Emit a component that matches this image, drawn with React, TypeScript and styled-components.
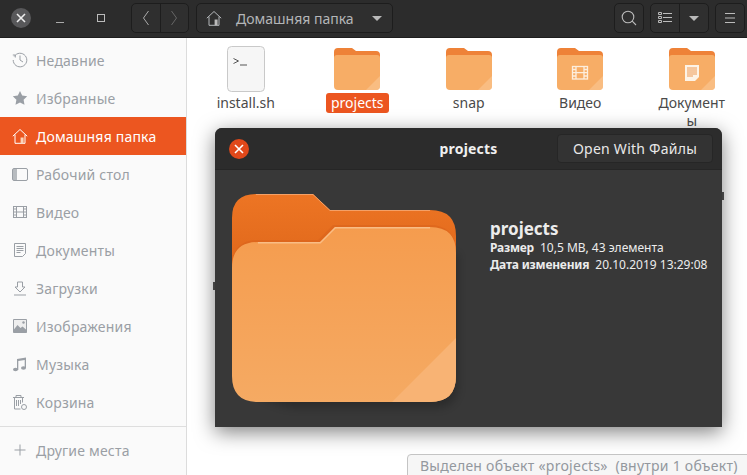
import React from "react";
import styled, { createGlobalStyle } from "styled-components";

const Global = createGlobalStyle`
  html, body { margin: 0; padding: 0; background: #fff; }
  body { width: 747px; height: 475px; overflow: hidden; font-family: "Noto Sans", "Liberation Sans", sans-serif; }
  * { box-sizing: border-box; }
`;

const Win = styled.div`
  position: relative; width: 747px; height: 475px; overflow: hidden; display: flex; flex-direction: column;
  font-size: 14px; background: #fff;
`;
const HeaderBar = styled.header`
  height: 38px; flex: none; background: #2c2c2c; border-bottom: 1px solid #1e1e1e;
  display: flex; align-items: flex-start; padding-top: 3px; color: #b9b9b9;
`;
const WinControls = styled.div`
  width: 131px; height: 30px; flex: none; display: flex; align-items: center; padding-left: 11px;
`;
const CloseCircle = styled.div`
  width: 20px; height: 20px; border-radius: 50%; background: #58585a; display: flex; align-items: center; justify-content: center; margin-right: 20px;
`;
const WinButton = styled.div`
  width: 20px; height: 20px; margin-right: 20px; display: flex; align-items: center; justify-content: center;
`;
const Group = styled.div<{ $w: number; $ml: number; $mr?: number }>`
  width: ${p => p.$w}px; margin-left: ${p => p.$ml}px; margin-right: ${p => p.$mr || 0}px; height: 30px; flex: none; background: #2f2f2f;
  border: 1px solid #1d1d1d; border-radius: 5px; display: flex; align-items: center;
`;
const Seg = styled.div<{ $border?: boolean }>`
  flex: 1; height: 100%; display: flex; align-items: center; justify-content: center;
  ${p => (p.$border ? "border-right: 1px solid #1d1d1d;" : "")}
`;
const PathGroup = styled(Group)`
  padding: 0 10px 0 9px; color: #b5b8bb;
`;
const PathLabel = styled.span`
  margin-left: 14px; flex: 1; font-size: 14px; color: #b4b6b8; white-space: nowrap;
`;
const Caret = styled.div`
  width: 0; height: 0; border-left: 5px solid transparent; border-right: 5px solid transparent; border-top: 5px solid #b9b9b9;
`;
const Spacer = styled.div`flex: 1;`;

const Body = styled.div`flex: 1; display: flex; min-height: 0;`;
const Sidebar = styled.aside`
  width: 187px; flex: none; background: #fafafa; border-right: 1px solid #dcdcdc; padding-top: 3px;
  display: flex; flex-direction: column;
`;
const SideItem = styled.div<{ $active?: boolean }>`
  height: 38px; flex: none; display: flex; align-items: center; padding-left: 12px; gap: 8px;
  font-size: 14px; white-space: nowrap; letter-spacing: .2px;
  color: ${p => (p.$active ? "#ffffff" : "#9a9fa5")};
  background: ${p => (p.$active ? "#ec5620" : "transparent")};
`;
const SideSep = styled.div`height: 1px; background: #dedede; margin-top: 5px;`;
const SideOther = styled(SideItem)`height: 46px;`;
const IconBox = styled.span`width: 16px; height: 16px; flex: none; display: flex;`;

const Grid = styled.main`
  flex: 1; display: grid; grid-template-columns: repeat(5, 111.5px); align-content: start; padding: 8px 0 0 3px;
`;
const Cell = styled.div`
  display: flex; flex-direction: column; align-items: center; color: #3d3d3d; font-size: 14px;
`;
const IconWrap = styled.div`height: 46px; display: flex; align-items: center; justify-content: center;`;
const Label = styled.div<{ $sel?: boolean }>`
  margin-top: 1px; padding: 1px 5px; border-radius: 3px; line-height: 18px; text-align: center; max-width: 80px;
  overflow-wrap: anywhere;
  color: ${p => (p.$sel ? "#fff" : "#4a4a4a")};
  background: ${p => (p.$sel ? "#ec5620" : "transparent")};
`;

const Dialog = styled.section`
  position: absolute; left: 215px; top: 128px; width: 507px; height: 299px; background: #383838;
  border-radius: 7px 7px 0 0; box-shadow: 0 5px 20px rgba(0,0,0,.5); display: flex; flex-direction: column; color: #eee;
`;
const DialogHead = styled.div`
  height: 42px; flex: none; background: #2c2c2c; border-bottom: 1px solid #262626; border-radius: 7px 7px 0 0;
  display: grid; grid-template-columns: 1fr auto 1fr; align-items: center; padding: 0 9px;
`;
const RedClose = styled.div`
  width: 20px; height: 20px; margin-left: 5px; border-radius: 50%; background: #e0481a; display: flex; align-items: center; justify-content: center;
`;
const DialogTitle = styled.div`font-weight: 700; font-size: 14px; letter-spacing: .2px; color: #f0f0f0;`;
const OpenBtn = styled.div`
  justify-self: end; width: 156px; height: 29px; background: #333333; border: 1px solid #262626; border-radius: 4px;
  display: flex; align-items: center; justify-content: center; font-size: 14px; letter-spacing: .25px; color: #e8e8e8; white-space: nowrap;
`;
const DialogBody = styled.div`flex: 1; display: flex; padding: 24px 0 0 17px; align-items: flex-start;`;
const Info = styled.div`margin-left: 34px; padding-top: 25px; display: flex; flex-direction: column; font-size: 12px; color: #ececec;`;
const InfoName = styled.div`font-size: 17px; font-weight: 700; line-height: 20px;`;
const InfoRow = styled.div`line-height: 17px; white-space: nowrap;`;
const InfoKey = styled.b`font-weight: 700; letter-spacing: -.2px; margin-right: 6px;`;

const Status = styled.div`
  position: absolute; left: 407px; top: 454px; width: 345px; height: 24px; background: #f6f6f6; border: 1px solid #c4c4c4;
  border-radius: 4px 0 0 0; padding-left: 12px; font-size: 14px; letter-spacing: .25px; line-height: 22px; color: #93989e; white-space: pre;
`;
const Tick = styled.div<{ $x: number; $y: number; $h: number }>`
  position: absolute; left: ${p => p.$x}px; top: ${p => p.$y}px; width: 2px; height: ${p => p.$h}px; background: #555;
`;

const S = { fill: "none", stroke: "currentColor", strokeWidth: 1 } as const;
const X = ({ c = "#fff" }: { c?: string }) => (
  <svg width="10" height="10" viewBox="0 0 10 10"><path d="M1 1l8 8M9 1l-8 8" stroke={c} strokeWidth="1.6" /></svg>
);
const HomeIcon = ({ fill }: { fill?: string }) => (
  <svg width="16" height="16" viewBox="0 0 16 16" {...S}>
    <path d="M.8 8.2L8 1.5l7.2 6.7M3 6.6v8.7h10V6.6" />
    <path d="M8.6 9.5h3v5.8h-3z" fill={fill || "currentColor"} stroke="none" />
  </svg>
);
const Clock = () => (
  <svg viewBox="0 0 16 16" width="16" height="16" {...S}>
    <path d="M2.2 4.5A6.8 6.8 0 1 1 1.2 8" /><path d="M8 3.5V8l3 2" /><path d="M.8 3h2.500v2.500" />
  </svg>
);
const Star = () => (
  <svg viewBox="0 0 16 16" width="16" height="16"><path d="M8 1l2.200 4.600 5 .7-3.600 3.500.9 5L8 12.400l-4.500 2.400.9-5L.8 6.300l5-.7z" fill="currentColor" /></svg>
);
const Desktop = () => (
  <svg viewBox="0 0 16 16" width="16" height="16" {...S}>
    <rect x=".5" y="2.500" width="15" height="12" rx="1.500" /><path d="M1 3h4v11H1z" fill="currentColor" stroke="none" opacity=".7" />
  </svg>
);
const Film = () => (
  <svg viewBox="0 0 16 16" width="16" height="16" {...S}>
    <rect x="1.500" y="2.500" width="13" height="11" /><path d="M4.500 2.500v11M11.500 2.500v11M4.500 8h7M1.500 5h3M1.500 8h3M1.500 11h3M11.500 5h3M11.500 8h3M11.500 11h3" />
  </svg>
);
const Doc = () => (
  <svg viewBox="0 0 16 16" width="16" height="16" {...S}>
    <path d="M2.500 1.500h11v10l-3 3h-8z" /><path d="M4.500 4.500h7M4.500 6.500h7M4.500 8.500h7M4.500 10.500h4" />
  </svg>
);
const Down = () => (
  <svg viewBox="0 0 16 16" width="16" height="16" {...S}>
    <path d="M5.500 2h5v5h2.500L8 12 3 7h2.500zM2 15h12" />
  </svg>
);
const Picture = () => (
  <svg viewBox="0 0 16 16" width="16" height="16">
    <path d="M1.500 1.500h13v13h-13z" fill="#eee" stroke="currentColor" /><path d="M1.500 12l4-5 3 3 2-1.500 4 3.500v2.500h-13z" fill="currentColor" /><circle cx="11.500" cy="4.500" r="1.200" fill="currentColor" />
  </svg>
);
const Music = () => (
  <svg viewBox="0 0 16 16" width="16" height="16">
    <path d="M5 3l9-1.500v10.500h-1.300V4L6.300 5v9H5z" fill="currentColor" /><ellipse cx="3.500" cy="13.500" rx="2.500" ry="1.800" fill="currentColor" /><ellipse cx="11.500" cy="12" rx="2.500" ry="1.800" fill="currentColor" />
  </svg>
);
const Trash = () => (
  <svg viewBox="0 0 16 16" width="16" height="16" {...S}>
    <path d="M1 3.500h11M4 3.500V1.500h5v2M2.500 3.500v11.500h6M10.500 3.500v5M4.500 6v6M6.500 6v6M8.500 6v4" /><circle cx="12" cy="13" r="2.500" />
  </svg>
);
const Plus = () => (
  <svg viewBox="0 0 16 16" width="16" height="16" {...S}><path d="M8 2.500v11M2.500 8h11" /></svg>
);

const SmallFolder = ({ glyph }: { glyph?: "film" | "doc" }) => (
  <svg width="46" height="42" viewBox="0 0 46 42">
    <path d="M0 4Q0 0 4 0h14l4 3h20q4 0 4 4v10H0z" fill="#ee8238" />
    <path d="M0 10q0-3 3-3h40q3 0 3 3v28q0 4-4 4H4q-4 0-4-4z" fill="#f7ad66" />
    <path d="M32 42l14-14v10q0 4-4 4z" fill="#f9c38f" opacity=".7" />
    {glyph === "film" && (
      <g stroke="#fdeedd" strokeWidth="1.300" fill="none">
        <rect x="15.500" y="18.500" width="15" height="12.500" /><path d="M19 18.500v12.500M27 18.500v12.500M19 24.700h8M15.500 21.500h3.500M15.500 24.700h3.500M15.500 28h3.500M27 21.500h3.500M27 24.700h3.500M27 28h3.500" />
      </g>
    )}
    {glyph === "doc" && (
      <g>
        <path d="M16 17h14v12l-4 4H16z" fill="#fdf3e6" />
        <path d="M18 20h10M18 22h10M18 24h10M18 26h10M18 28h6" stroke="#ee9a55" strokeWidth="1" />
      </g>
    )}
  </svg>
);
const ScriptFile = () => (
  <svg width="38" height="46" viewBox="0 0 38 46">
    <rect x=".5" y=".5" width="37" height="45" rx="4" fill="#f6f6f6" stroke="#c9c9c9" />
    <path d="M6.500 12.500l5 2.500-5 2.500M13 19h7" fill="none" stroke="#555" strokeWidth="1" />
  </svg>
);
const BigFolder = () => (
  <svg width="224" height="208" viewBox="0 0 224 208" style={{ overflow: "visible", flex: "none" }}>
    <defs>
      <linearGradient id="bf" x1="0" y1="0" x2="0" y2="1">
        <stop offset="0" stopColor="#f59c4e" /><stop offset="1" stopColor="#f5aa63" />
      </linearGradient>
      <linearGradient id="bb" x1="0" y1="0" x2="0" y2="1">
        <stop offset="0" stopColor="#ed7524" /><stop offset="1" stopColor="#dc6418" />
      </linearGradient>
      <filter id="blur" x="-20%" y="-20%" width="140%" height="140%"><feGaussianBlur stdDeviation="4" /></filter>
    </defs>
    <path d="M30 60h196v130q0 24-24 24H70q-20 0-40-10z" fill="#000" opacity=".22" filter="url(#blur)" />
    <path d="M0 24Q0 0 24 0h57l17 16h100q26 0 26 26v50H0z" fill="url(#bb)" />
    <path d="M24 .5h57l17 16h100" fill="none" stroke="#f4a066" strokeWidth="1" />
    <path d="M86 46l15-15h97q22 0 26 22v8H0V70q2-24 26-24z" fill="#d8631b" opacity=".55" />
    <path d="M88 48l15-15h95q26 0 26 26v123q0 26-26 26H26q-26 0-26-26V74q0-26 26-26z" fill="url(#bf)" />
    <path d="M26 48.700h62.300l15-15H198" fill="none" stroke="#f9bd85" strokeWidth="1.400" />
    <path d="M160 208l64-64v38q0 26-26 26z" fill="#f8b374" />
  </svg>
);

const items: { label: string; icon: React.ReactNode; active?: boolean }[] = [
  { label: "Недавние", icon: <Clock /> },
  { label: "Избранные", icon: <Star /> },
  { label: "Домашняя папка", icon: <HomeIcon fill="#fbd3b9" />, active: true },
  { label: "Рабочий стол", icon: <Desktop /> },
  { label: "Видео", icon: <Film /> },
  { label: "Документы", icon: <Doc /> },
  { label: "Загрузки", icon: <Down /> },
  { label: "Изображения", icon: <Picture /> },
  { label: "Музыка", icon: <Music /> },
  { label: "Корзина", icon: <Trash /> },
];

export default function App() {
  return (
    <Win>
      <Global />
      <HeaderBar>
        <WinControls>
          <CloseCircle><X c="#eee" /></CloseCircle>
          <WinButton><svg width="10" height="10"><path d="M0 9.500h8" stroke="#aaa" /></svg></WinButton>
          <WinButton><svg width="10" height="10"><rect x="1.500" y="1.500" width="7" height="7" fill="none" stroke="#bbb" /></svg></WinButton>
        </WinControls>
        <Group $w={58} $ml={0}>
          <Seg $border><svg width="8" height="16"><path d="M6.500 1L1.500 8l5 7" fill="none" stroke="#aaa" /></svg></Seg>
          <Seg><svg width="8" height="16"><path d="M1.500 1l5 7-5 7" fill="none" stroke="#666" /></svg></Seg>
        </Group>
        <PathGroup $w={197} $ml={7}>
          <HomeIcon fill="#bbb" />
          <PathLabel>Домашняя папка</PathLabel>
          <Caret />
        </PathGroup>
        <Spacer />
        <Group $w={30} $ml={0}>
          <Seg><svg width="16" height="16" viewBox="0 0 16 16" fill="none" stroke="#bbb" strokeWidth="1.100"><circle cx="7" cy="7" r="5.800" /><path d="M11.200 11.200L15 15" /></svg></Seg>
        </Group>
        <Group $w={59} $ml={6}>
          <Seg $border><svg width="14" height="12" viewBox="0 0 14 12" fill="none" stroke="#bbb"><path d="M.5.500h3v2h-3zM.5 4.500h3v2h-3zM.5 8.500h3v2h-3zM5 1.500h9M5 5.500h9M5 9.500h9" /></svg></Seg>
          <Seg><Caret /></Seg>
        </Group>
        <Group $w={30} $ml={6} $mr={2}>
          <Seg><svg width="12" height="12" viewBox="0 0 12 12" stroke="#bbb"><path d="M1 1.500h10M1 6h10M1 10.500h10" /></svg></Seg>
        </Group>
      </HeaderBar>
      <Body>
        <Sidebar>
          {items.map(it => (
            <SideItem key={it.label} $active={it.active}>
              <IconBox>{it.icon}</IconBox>
              {it.label}
            </SideItem>
          ))}
          <SideSep />
          <SideOther><IconBox><Plus /></IconBox>Другие места</SideOther>
        </Sidebar>
        <Grid>
          <Cell><IconWrap><ScriptFile /></IconWrap><Label>install.sh</Label></Cell>
          <Cell><IconWrap><SmallFolder /></IconWrap><Label $sel>projects</Label></Cell>
          <Cell><IconWrap><SmallFolder /></IconWrap><Label>snap</Label></Cell>
          <Cell><IconWrap><SmallFolder glyph="film" /></IconWrap><Label>Видео</Label></Cell>
          <Cell><IconWrap><SmallFolder glyph="doc" /></IconWrap><Label>Документы</Label></Cell>
        </Grid>
      </Body>
      <Tick $x={213} $y={282} $h={8} />
      <Tick $x={722} $y={192} $h={8} />
      <Dialog>
        <DialogHead>
          <RedClose><X /></RedClose>
          <DialogTitle>projects</DialogTitle>
          <OpenBtn>Open With Файлы</OpenBtn>
        </DialogHead>
        <DialogBody>
          <BigFolder />
          <Info>
            <InfoName>projects</InfoName>
            <InfoRow><InfoKey>Размер</InfoKey>10,5 MB, 43 элемента</InfoRow>
            <InfoRow><InfoKey>Дата изменения</InfoKey>20.10.2019 13:29:08</InfoRow>
          </Info>
        </DialogBody>
      </Dialog>
      <Status>{"Выделен объект «projects»  (внутри 1 объект)"}</Status>
    </Win>
  );
}
